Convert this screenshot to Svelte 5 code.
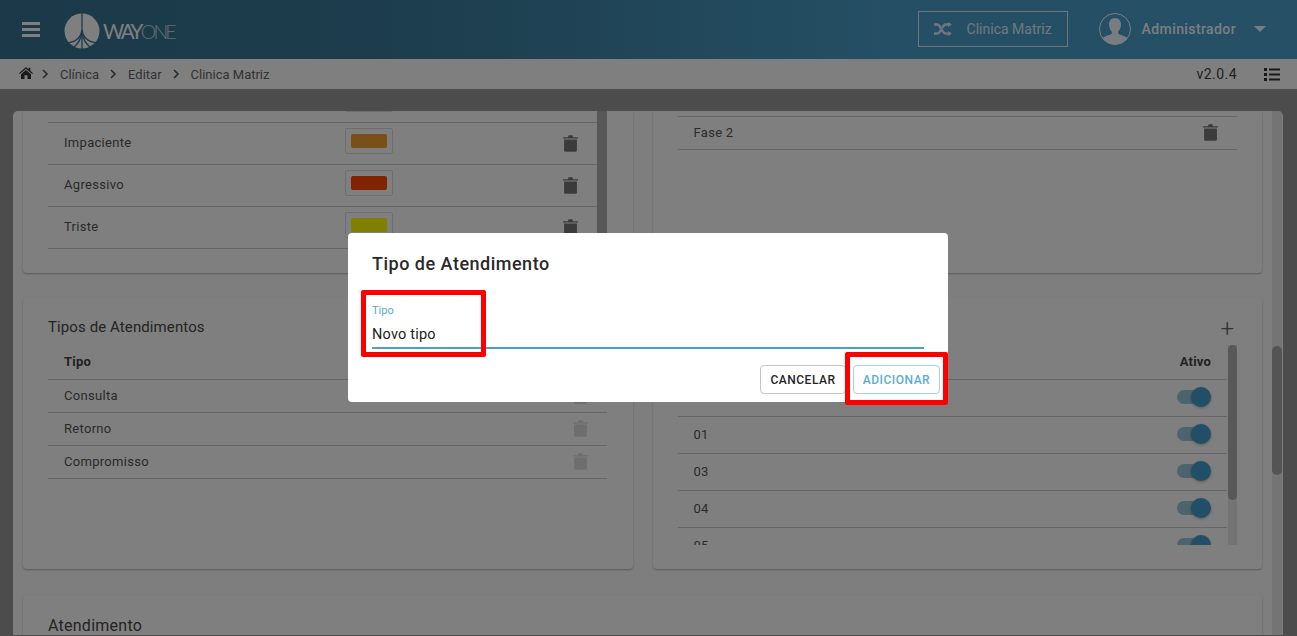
<script>
  const moods = [
    { name: '', color: '#4caf50' },
    { name: 'Impaciente', color: '#f4a032' },
    { name: 'Agressivo', color: '#ff4600' },
    { name: 'Triste', color: '#ffff00' }
  ];
  const types = ['Consulta', 'Retorno', 'Compromisso'];
  const chairs = ['02', '01', '03', '04', '05'];
</script>

{#snippet trash(faint)}
  <svg class="trash" class:faint width="15" height="18" viewBox="0 0 14 18" preserveAspectRatio="none" aria-hidden="true">
    <path d="M0 3.2h14v1.3H0zM4.6 3.2 5.2 1.2h3.6l.6 2z" />
    <path d="M1 5.600h12v10.600a1.600 1.600 0 0 1-1.600 1.600H2.600A1.600 1.600 0 0 1 1 16.200z" />
  </svg>
{/snippet}

<div class="page">
  <header class="topbar">
    <svg class="burger" width="18" height="15" viewBox="0 0 18 15" aria-hidden="true">
      <path d="M0 0h18v3H0zM0 6h18v3H0zM0 12h18v3H0z" />
    </svg>
    <svg class="logo" width="36" height="36" viewBox="0 0 36 36" aria-hidden="true">
      <circle cx="18" cy="18" r="17.500" fill="#fff" />
      <g fill="none" stroke="#397590" stroke-width="1.500">
        <path d="M18 0v36" stroke-width="1.300" />
        <path d="M18 17C17 24 12 29 3 30" />
        <path d="M18 17C19 24 24 29 33 30" />
        <path d="M18 20C17 26 14 31 9 35" />
        <path d="M18 20C19 26 22 31 27 35" />
      </g>
    </svg>
    <span class="wordmark">WAY<span>ONE</span></span>
    <div class="spacer"></div>
    <div class="clinic">
      <svg width="18" height="14" viewBox="0 0 18 14" aria-hidden="true">
        <path d="M0 2.500h3.500c3 0 4.500 9 8 9H15M0 11.500h3.500c1.300 0 2.300-1.500 3.200-3.200M15 2.500h-3.500c-1.300 0-2.300 1.500-3.200 3.200" fill="none" stroke="currentColor" stroke-width="2.400" />
        <path d="M14 0l4 2.500-4 2.500zM14 9l4 2.500-4 2.500z" fill="currentColor" />
      </svg>
      <span>Clinica Matriz</span>
    </div>
    <svg class="avatar" width="32" height="32" viewBox="0 0 32 32" aria-hidden="true">
      <defs><clipPath id="avatar-clip"><circle cx="16" cy="16" r="15.500" /></clipPath></defs>
      <g clip-path="url(#avatar-clip)">
        <path d="M16 5c3.800 0 6 2.800 6 6.500 0 3-1.200 5.500-2.800 7v2.300c2 1.500 7.800 2.200 9 4.700V32H3.800v-6.500c1.200-2.500 7-3.200 9-4.700v-2.300c-1.600-1.500-2.800-4-2.800-7C10 7.800 12.200 5 16 5z" fill="currentColor" />
      </g>
      <circle cx="16" cy="16" r="15.500" fill="none" stroke="currentColor" />
    </svg>
    <span class="user">Administrador</span>
    <span class="caret"></span>
  </header>

  <nav class="crumbs">
    <svg class="home" width="14" height="12" viewBox="0 0 14 12" aria-hidden="true">
      <path d="M7 0 9.500 2.200V.8h1.800v3L14 6.200l-.8.900L7 1.700.8 7.100 0 6.200zM7 3l5 4.300V12H8.500V8.300h-3V12H2V7.300z" />
    </svg>
    {#each ['Clínica', 'Editar', 'Clinica Matriz'] as item}
      <svg class="chev" width="7" height="10" viewBox="0 0 7 10" aria-hidden="true">
        <path d="M1 1l4 4-4 4" fill="none" stroke="currentColor" stroke-width="1.600" />
      </svg>
      <span>{item}</span>
    {/each}
    <div class="spacer"></div>
    <span class="version">v2.0.4</span>
    <svg class="listicon" width="16" height="13" viewBox="0 0 16 13" aria-hidden="true">
      <path d="M0 0h3v3H0zM0 5h3v3H0zM0 10h3v3H0zM5 .5h11v2H5zM5 5.500h11v2H5zM5 10.500h11v2H5z" />
    </svg>
  </nav>

  <main class="main">
    <div class="panel">
      <div class="content">
        <div class="cardrow first">
          <section class="card">
            <div class="scroller moods">
              <div class="rows">
                {#each moods as mood}
                  <div class="row mood">
                    <span class="label">{mood.name}</span>
                    <span class="swatchbox"><span class="swatch" style="background:{mood.color}"></span></span>
                    <span class="grow"></span>
                    {@render trash(false)}
                  </div>
                {/each}
              </div>
              <div class="bar dark"></div>
            </div>
          </section>
          <section class="card phases">
            <div class="row phase">
              <span class="label">Fase 2</span>
              <span class="grow"></span>
              {@render trash(false)}
            </div>
          </section>
        </div>

        <div class="cardrow second">
          <section class="card types">
            <h2>Tipos de Atendimentos</h2>
            <div class="row head"><span>Tipo</span></div>
            {#each types as type}
              <div class="row typerow">
                <span class="label">{type}</span>
                <span class="grow"></span>
                {@render trash(true)}
              </div>
            {/each}
          </section>
          <section class="card chairs">
            <div class="chairtop"><h2>Cadeiras</h2><span class="plus">+</span></div>
            <div class="scroller chairlist">
              <div class="rows">
                <div class="row head chairhead"><span>Nome</span><span class="grow"></span><span>Ativo</span></div>
                {#each chairs as chair}
                  <div class="row chair">
                    <span class="label">{chair}</span>
                    <span class="grow"></span>
                    <span class="toggle"><span class="knob"></span></span>
                  </div>
                {/each}
              </div>
              <div class="bar light"><div class="thumb"></div></div>
            </div>
          </section>
        </div>

        <section class="card third">
          <h2>Atendimento</h2>
        </section>
      </div>
      <div class="pagebar"><div class="pagethumb"></div></div>
    </div>
  </main>
</div>

<div class="overlay">
  <div class="modal">
    <h1>Tipo de Atendimento</h1>
    <div class="field">
      <span class="fieldlabel">Tipo</span>
      <span class="fieldvalue">Novo tipo</span>
    </div>
    <div class="actions">
      <button class="cancel">CANCELAR</button>
      <button class="add">ADICIONAR</button>
    </div>
    <div class="mark markfield"></div>
    <div class="mark markbutton"></div>
  </div>
</div>

<style>
  :global(body) {
    margin: 0;
    overflow: hidden;
    font-family: Roboto, "Liberation Sans", sans-serif;
  }
  .page {
    height: 636px;
    display: flex;
    flex-direction: column;
    overflow: hidden;
    color: #444;
  }
  .spacer, .grow { flex: 1; }

  .topbar {
    height: 59px;
    flex: none;
    display: flex;
    align-items: center;
    padding: 0 31px 1px 22px;
    box-sizing: border-box;
    color: #f4fbff;
    background: linear-gradient(90deg, #377290 0%, #3a7c9c 32%, #4a9ec9 68%, #4ca0cc 100%);
  }
  .burger { fill: #fff; }
  .logo { margin: 3px 0 0 24px; }
  .wordmark {
    margin: 4px 0 0 3px;
    font-family: Lato, sans-serif;
    font-size: 20.500px;
    font-weight: 400;
    letter-spacing: -2.600px;
    color: #fff;
  }
  .wordmark span { font-size: 19.500px; font-weight: 300; opacity: .7; letter-spacing: -2.800px; }
  .clinic {
    width: 150px;
    height: 36px;
    box-sizing: border-box;
    display: flex;
    align-items: center;
    gap: 15px;
    padding-left: 15px;
    border: 1px solid #f4fbff;
    opacity: .88;
    font-size: 14px;
  }
  .avatar { margin-left: 31px; }
  .user {
    margin-left: 11px;
    font-size: 14px;
    font-weight: 500;
    letter-spacing: .4px;
  }
  .caret {
    margin-left: 18px;
    width: 0;
    height: 0;
    border-left: 6.500px solid transparent;
    border-right: 6.500px solid transparent;
    border-top: 6px solid #f4fbff;
  }

  .crumbs {
    height: 30px;
    flex: none;
    box-sizing: border-box;
    display: flex;
    align-items: center;
    padding: 0 17px 0 19px;
    background: #fff;
    font-size: 13px;
    color: #666;
  }
  .home { fill: #333; margin: -2px -2px 0 0; }
  .chev { color: #555; margin: -1px 11px 0 11px; }
  .version { font-size: 14px; letter-spacing: .45px; color: #444; }
  .listicon { margin-left: 27px; fill: #333; }

  .main {
    flex: 1;
    min-height: 0;
    background: #999;
    padding: 22px 14px 1px 13px;
    display: flex;
  }
  .panel {
    flex: 1;
    min-width: 0;
    display: flex;
    background: #fcfcfc;
    border-radius: 5px 5px 0 0;
    overflow: hidden;
  }
  .content {
    flex: 1;
    min-width: 0;
    padding: 0 10px;
    overflow: hidden;
  }
  .pagebar { width: 10px; margin-right: 1px; background: #e8e8e8; padding-top: 235px; flex: none; }
  .pagethumb { height: 129px; background: #a8a8a8; border-radius: 5px; }

  .cardrow { display: flex; gap: 20px; }
  .first { height: 162px; margin-bottom: 25px; }
  .second { height: 271px; margin-bottom: 26px; }
  .card {
    flex: none;
    width: calc(50% - 10px);
    box-sizing: border-box;
    background: #fff;
    border-radius: 0 0 4px 4px;
    box-shadow: 0 1px 2px rgba(0, 0, 0, .28);
    overflow: hidden;
  }
  .second .card { border-radius: 4px; }
  .third { width: 100%; height: 60px; padding: 18px 25px 0; border-radius: 4px; }
  h2 {
    margin: 0;
    font-size: 15px;
    font-weight: 400;
    line-height: 22px;
    letter-spacing: .1px;
    color: #484848;
  }
  .third h2 { font-size: 16px; line-height: 24px; margin-top: 1px; letter-spacing: .25px; }

  .row {
    display: flex;
    align-items: center;
    box-sizing: border-box;
    border-bottom: 1px solid #ccc;
    font-size: 13px;
    letter-spacing: .3px;
  }
  .label { color: #555; }
  .scroller { display: flex; overflow: hidden; }
  .rows { flex: 1; min-width: 0; }

  .moods { margin: 0 26px 0 25px; height: 140px; }
  .moods .rows { margin-top: -30px; }
  .mood { height: 42px; padding: 0 19px 2px 16px; }
  .mood .label { width: 281px; }
  .swatchbox {
    width: 48px;
    height: 26px;
    box-sizing: border-box;
    border: 1px solid #ddd;
    border-radius: 2px;
    padding: 5px;
    display: block;
    margin-bottom: 4px;
  }
  .swatch { display: block; height: 100%; border-radius: 2px; }
  .bar { width: 10px; flex: none; }
  .bar.dark { background: #b0b0b0; }
  .trash { fill: #777; display: block; }
  .trash.faint { fill: #dcdcdc; }

  .phases { padding: 5px 25px 0; }
  .phase { height: 34px; padding: 0 19px 2px 16px; border-top: 1px solid #ccc; }

  .types { padding: 18px 26px 0 25px; }
  .types h2 { margin-bottom: 6px; }
  .head { font-weight: 700; color: #444; letter-spacing: .2px; }
  .types .head { height: 36px; padding-left: 16px; }
  .typerow { height: 33px; padding: 0 19px 2px 16px; }

  .chairs { padding: 18px 25px 0; }
  .chairtop { display: flex; justify-content: space-between; height: 29px; }
  .plus {
    font-size: 24px;
    line-height: 24px;
    font-weight: 300;
    color: #666;
    margin: 1px 3px 0 0;
  }
  .chairlist { height: 200px; }
  .chairhead { height: 35px; padding: 0 16px 1px 16px; }
  .chair { height: 37px; padding: 0 16px 2px 16px; }
  .toggle {
    position: relative;
    width: 32px;
    height: 14px;
    border-radius: 7px;
    background: #98c8dc;
    margin-right: 2px;
  }
  .knob {
    position: absolute;
    right: -2px;
    top: -3px;
    width: 20px;
    height: 20px;
    border-radius: 50%;
    background: #429fd0;
    box-shadow: 0 1px 3px rgba(0, 0, 0, .3);
  }
  .bar.light { width: 9px; margin-left: 1px; background: #e8e8e8; }
  .thumb { height: 155px; background: #b0b0b0; border-radius: 5px; }

  .overlay {
    position: fixed;
    inset: 0;
    background: rgba(0, 0, 0, .5);
    display: flex;
    justify-content: center;
    padding-top: 233px;
    box-sizing: border-box;
  }
  .modal {
    position: relative;
    width: 600px;
    height: 169px;
    margin-right: 1px;
    box-sizing: border-box;
    padding: 20px 24px 0;
    background: #fff;
    border-radius: 4px;
    color: #212121;
  }
  h1 {
    margin: 0;
    font-size: 18px;
    font-weight: 500;
    line-height: 22px;
    letter-spacing: .5px;
    color: #2a2a2a;
  }
  .field {
    margin-top: 27px;
    height: 47px;
    box-sizing: border-box;
    display: flex;
    flex-direction: column;
    padding-top: 2px;
    border-bottom: 2px solid #4ba3c7;
  }
  .fieldlabel { font-size: 11px; line-height: 13px; color: #5aa9cf; }
  .fieldvalue { font-size: 14.500px; line-height: 20px; margin-top: 8px; color: #222; letter-spacing: .2px; }
  .actions {
    display: flex;
    justify-content: flex-end;
    gap: 7px;
    margin: 16px -16px 0 0;
  }
  button {
    font-family: inherit;
    font-size: 12px;
    font-weight: 500;
    letter-spacing: .5px;
    height: 29px;
    padding: 0;
    background: #fff;
    border-radius: 4px;
  }
  .cancel { width: 86px; border: 1px solid #c4c4c4; color: #262626; }
  .add { width: 87px; border: 1px solid #a3d4e6; color: #5aaed2; }
  .mark { position: absolute; border: 5px solid #f00; box-sizing: border-box; border-radius: 2px; }
  .markfield { left: 13px; top: 57px; width: 125px; height: 67px; }
  .markbutton { left: 497px; top: 119px; width: 103px; height: 53px; }
</style>
